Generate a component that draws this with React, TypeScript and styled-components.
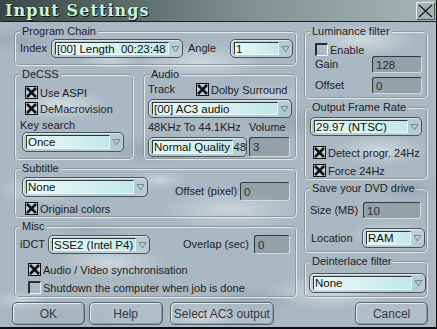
import React from 'react'
import styled, { createGlobalStyle } from 'styled-components'

const GlobalStyle = createGlobalStyle`
    html, body {
        margin: 0;
        padding: 0;
    }
    body {
        font-family: "Liberation Sans", Arial, sans-serif;
        font-size: 11px;
        color: #1e2225;
    }
`;

const cloud = (w: number, h: number, x: number, y: number, a: number) =>
    `radial-gradient(ellipse ${w}px ${h}px at ${x}px ${y}px, rgba(234,240,243,${a}), rgba(234,240,243,0) 70%)`;
const shade = (w: number, h: number, x: number, y: number, a: number) =>
    `radial-gradient(ellipse ${w}px ${h}px at ${x}px ${y}px, rgba(128,146,162,${a}), rgba(128,146,162,0) 70%)`;

const sky = [
    cloud(70, 22, 60, 105, 0.65),
    cloud(40, 14, 110, 60, 0.5),
    cloud(90, 26, 200, 62, 0.55),
    cloud(80, 24, 360, 40, 0.6),
    cloud(50, 16, 270, 95, 0.45),
    cloud(60, 20, 40, 190, 0.55),
    cloud(100, 30, 230, 210, 0.5),
    cloud(40, 14, 160, 180, 0.45),
    cloud(70, 22, 380, 150, 0.55),
    cloud(80, 24, 110, 262, 0.55),
    cloud(90, 26, 330, 292, 0.55),
    cloud(60, 20, 390, 235, 0.5),
    cloud(50, 16, 200, 318, 0.5),
    cloud(40, 14, 20, 300, 0.45),
    shade(70, 22, 150, 150, 0.45),
    shade(80, 24, 290, 122, 0.4),
    shade(90, 24, 60, 318, 0.4),
    shade(70, 22, 250, 300, 0.35),
    shade(60, 20, 20, 40, 0.35),
    shade(50, 18, 410, 190, 0.35),
    shade(50, 16, 90, 230, 0.35),
    '#a9b8c3',
].join(', ');

const Window = styled.div`
    width: 437px;
    height: 329px;
    box-sizing: border-box;
    display: flex;
    flex-direction: column;
    background: ${sky};
    border-right: 1px solid #0b0d0e;
    border-bottom: 2px solid #0b0d0e;
    overflow: hidden;
`;

const TitleBar = styled.div`
    height: 21px;
    flex-shrink: 0;
    display: flex;
    align-items: center;
    justify-content: space-between;
    padding: 0 1px 0 5px;
    background: linear-gradient(90deg, #394747 0%, #5d6d6c 30%, #849493 60%, #a6b5b4 100%);
    border-bottom: 1px solid #1a2222;
`;

const Title = styled.h1`
    margin: 0;
    font-family: "DejaVu Serif", "Liberation Serif", serif;
    font-weight: bold;
    font-size: 16px;
    letter-spacing: 1.1px;
    color: #cdf3dc;
    text-shadow: 1px 1px 0 #0f1b16, 0 0 1px #0f1b16;
`;

const CloseBox = styled.div`
    width: 19px;
    height: 18px;
    box-sizing: border-box;
    display: flex;
    align-items: center;
    justify-content: center;
    border-top: 1px solid #e6eded;
    border-left: 1px solid #e6eded;
    border-bottom: 1px solid #4a5656;
    border-right: 1px solid #4a5656;
`;

const Main = styled.div`
    display: flex;
    gap: 7px;
    padding: 3px 0 0 14px;
`;

const Column = styled.div<{ $w: number }>`
    width: ${p => p.$w}px;
    display: flex;
    flex-direction: column;
    gap: 2px;
`;

const GroupRow = styled.div`
    display: flex;
    gap: 9px;
`;

const Group = styled.fieldset<{ $h: number; $w?: number }>`
    margin: 0;
    padding: 0 3px;
    min-width: 0;
    box-sizing: border-box;
    height: ${p => p.$h}px;
    ${p => (p.$w ? `width: ${p.$w}px;` : '')}
    border: 2px groove #e2eaee;
    border-radius: 5px;
    display: flex;
    flex-direction: column;
`;

const Legend = styled.legend`
    padding: 0 2px;
    margin-left: 1px;
    line-height: 13px;
    font-size: 11px;
`;

const Row = styled.div<{ $mt?: number; $ml?: number; $gap?: number; $align?: string }>`
    display: flex;
    align-items: ${p => p.$align ?? 'center'};
    gap: ${p => p.$gap ?? 0}px;
    margin-top: ${p => p.$mt ?? 0}px;
    margin-left: ${p => p.$ml ?? 0}px;
`;

const Label = styled.span<{ $w?: number; $ml?: number; $mt?: number }>`
    ${p => (p.$w ? `width: ${p.$w}px;` : '')}
    margin-left: ${p => p.$ml ?? 0}px;
    margin-top: ${p => p.$mt ?? 0}px;
    flex-shrink: 0;
    white-space: nowrap;
    line-height: 13px;
`;

const ComboShell = styled.div<{ $w: number; $h?: number; $ml?: number }>`
    width: ${p => p.$w}px;
    height: ${p => p.$h ?? 19}px;
    margin-left: ${p => p.$ml ?? 0}px;
    flex-shrink: 0;
    box-sizing: border-box;
    display: flex;
    padding: 2px 1px 2px 3px;
    border: 1px solid #46545a;
    border-radius: 5px;
    background: rgba(196, 222, 226, 0.5);
    box-shadow: inset 1px 1px 0 rgba(255, 255, 255, 0.55);
    overflow: hidden;
`;

const ComboField = styled.div`
    flex: 1;
    min-width: 0;
    display: flex;
    align-items: center;
    padding-left: 1px;
    border-top: 1px solid #2c383a;
    border-left: 1px solid #2c383a;
    border-bottom: 1px solid #eef8f8;
    border-right: 1px solid #eef8f8;
    background: linear-gradient(90deg, #e9f7f3 0%, #d6f1ee 55%, #bfe7ec 100%);
    white-space: pre;
    overflow: visible;
    font-size: 11.5px;
    color: #0d1113;
`;

const ComboArrow = styled.div`
    width: 12px;
    flex-shrink: 0;
    display: flex;
    align-items: center;
    justify-content: center;
    position: relative;
    z-index: 1;
`;

const Edit = styled.div<{ $w: number; $h?: number; $ml?: number }>`
    width: ${p => p.$w}px;
    height: ${p => p.$h ?? 17}px;
    margin-left: ${p => p.$ml ?? 0}px;
    flex-shrink: 0;
    box-sizing: border-box;
    display: flex;
    align-items: center;
    padding-left: 3px;
    border-top: 1px solid #2f3a3d;
    border-left: 1px solid #2f3a3d;
    border-bottom: 1px solid #d2dcdf;
    border-right: 1px solid #d2dcdf;
    border-radius: 3px;
    background: rgba(128, 138, 144, 0.5);
    font-size: 11.5px;
    color: #2a3032;
`;

const CheckLine = styled.label<{ $mt?: number; $ml?: number }>`
    display: flex;
    align-items: center;
    gap: 2px;
    margin-top: ${p => p.$mt ?? 0}px;
    margin-left: ${p => p.$ml ?? 0}px;
    height: 13px;
    white-space: nowrap;
    font-size: 11px;
`;

const Box = styled.span<{ $on: boolean }>`
    width: 13px;
    height: 13px;
    flex-shrink: 0;
    box-sizing: border-box;
    display: inline-flex;
    ${p =>
        p.$on
            ? `border: 1px solid #101214; background: rgba(255,255,255,.3);`
            : `border-top: 2px solid #2a2e30; border-left: 2px solid #2a2e30;
               border-bottom: 1px solid #f4f8fa; border-right: 1px solid #f4f8fa;`}
`;

const ButtonBar = styled.div`
    display: flex;
    gap: 4px;
    padding: 4px 8px 0 12px;
`;

const Button = styled.button<{ $w: number; $ml?: number }>`
    width: ${p => p.$w}px;
    height: 23px;
    margin-left: ${p => p.$ml ?? 0}px;
    padding: 0;
    border: 1px solid #56646b;
    border-radius: 5px;
    background: rgba(205, 216, 224, 0.22);
    box-shadow: inset 1px 1px 0 rgba(255, 255, 255, 0.7), inset -1px -1px 0 rgba(70, 82, 90, 0.35);
    font-family: "Liberation Sans", Arial, sans-serif;
    font-size: 12px;
    color: #33393c;
`;

const Arrow = () => (
    <svg width="9" height="8" viewBox="0 0 9 8">
        <polygon points="1,1.5 8,1.5 4.5,7" fill="none" stroke="#6d8a92" strokeWidth="1" />
    </svg>
);

const Combo = (props: { w: number; h?: number; ml?: number; value: string }) => (
    <ComboShell $w={props.w} $h={props.h} $ml={props.ml}>
        <ComboField>{props.value}</ComboField>
        <ComboArrow>
            <Arrow />
        </ComboArrow>
    </ComboShell>
);

const Check = (props: { on?: boolean; text: string; mt?: number; ml?: number }) => (
    <CheckLine $mt={props.mt} $ml={props.ml}>
        <Box $on={!!props.on}>
            {props.on && (
                <svg width="11" height="11" viewBox="0 0 11 11">
                    <path d="M1 1 L10 10 M10 1 L1 10" stroke="#0c0e10" strokeWidth="2.6" />
                </svg>
            )}
        </Box>
        {props.text}
    </CheckLine>
);

const App = () => {
    return (
        <>
            <GlobalStyle />
            <Window>
                <TitleBar>
                    <Title>Input Settings</Title>
                    <CloseBox>
                        <svg width="15" height="14" viewBox="0 0 15 14">
                            <path d="M1 1 L14 13 M14 1 L1 13" stroke="#161a1a" strokeWidth="1.2" />
                        </svg>
                    </CloseBox>
                </TitleBar>

                <Main>
                    <Column $w={283}>
                        <Group $h={41}>
                            <Legend>Program Chain</Legend>
                            <Row $mt={1} $ml={1}>
                                <Label $w={31}>Index</Label>
                                <Combo w={132} value="[00] Length  00:23:48" />
                                <Label $w={42} $ml={5}>Angle</Label>
                                <Combo w={63} value="1" />
                            </Row>
                        </Group>

                        <GroupRow>
                            <Group $h={92} $w={120}>
                                <Legend>DeCSS</Legend>
                                <Check on text="Use ASPI" mt={5} ml={6} />
                                <Check on text="DeMacrovision" mt={3} ml={6} />
                                <Label $ml={1} $mt={4}>Key search</Label>
                                <Combo w={102} h={20} ml={3} value="Once" />
                            </Group>

                            <Group $h={92} $w={154}>
                                <Legend>Audio</Legend>
                                <Row $mt={2}>
                                    <Label $w={48}>Track</Label>
                                    <Check on text="Dolby Surround" />
                                </Row>
                                <Row $mt={3}>
                                    <Combo w={144} value="[00] AC3 audio" />
                                </Row>
                                <Row $mt={3}>
                                    <Label $w={101}>48KHz To 44.1KHz</Label>
                                    <Label>Volume</Label>
                                </Row>
                                <Row $mt={3} $gap={2}>
                                    <Combo w={99} h={20} value="Normal Quality 48" />
                                    <Edit $w={41} $h={20}>3</Edit>
                                </Row>
                            </Group>
                        </GroupRow>

                        <Group $h={56}>
                            <Legend>Subtitle</Legend>
                            <Row $mt={2} $ml={3} $align="flex-start">
                                <Combo w={126} h={20} value="None" />
                                <Row $mt={5} $ml={27}>
                                    <Label $w={65}>Offset (pixel)</Label>
                                    <Edit $w={50} $h={19}>0</Edit>
                                </Row>
                            </Row>
                            <Check on text="Original colors" mt={1} ml={6} />
                        </Group>

                        <Group $h={78}>
                            <Legend>Misc</Legend>
                            <Row $mt={2} $ml={1}>
                                <Label $w={28}>iDCT</Label>
                                <Combo w={102} value="SSE2 (Intel P4)" />
                                <Label $w={71} $ml={33}>Overlap (sec)</Label>
                                <Edit $w={36} $h={19}>0</Edit>
                            </Row>
                            <Check on text="Audio / Video synchronisation" mt={9} ml={9} />
                            <Check text="Shutdown the computer when job is done" mt={5} ml={9} />
                        </Group>
                    </Column>

                    <Column $w={124}>
                        <Group $h={74}>
                            <Legend>Luminance filter</Legend>
                            <Check text="Enable" mt={5} ml={6} />
                            <Row $mt={0} $ml={6}>
                                <Label $w={57}>Gain</Label>
                                <Edit $w={50}>128</Edit>
                            </Row>
                            <Row $mt={4} $ml={6}>
                                <Label $w={57}>Offset</Label>
                                <Edit $w={50}>0</Edit>
                            </Row>
                        </Group>

                        <Group $h={79}>
                            <Legend>Output Frame Rate</Legend>
                            <Row $mt={3} $ml={1}>
                                <Combo w={112} value="29.97 (NTSC)" />
                            </Row>
                            <Check on text="Detect progr. 24Hz" mt={10} ml={4} />
                            <Check on text="Force 24Hz" mt={5} ml={4} />
                        </Group>

                        <Group $h={71}>
                            <Legend>Save your DVD drive</Legend>
                            <Row $mt={7} $ml={1}>
                                <Label $w={53}>Size (MB)</Label>
                                <Edit $w={58}>10</Edit>
                            </Row>
                            <Row $mt={9} $ml={2}>
                                <Label $w={51}>Location</Label>
                                <Combo w={63} h={20} value="RAM" />
                            </Row>
                        </Group>

                        <Group $h={43}>
                            <Legend>Deinterlace filter</Legend>
                            <Row $mt={5}>
                                <Combo w={117} h={20} value="None" />
                            </Row>
                        </Group>
                    </Column>
                </Main>

                <ButtonBar>
                    <Button $w={73}>OK</Button>
                    <Button $w={74}>Help</Button>
                    <Button $w={105} $ml={3}>Select AC3 output</Button>
                    <Button $w={73} $ml={77}>Cancel</Button>
                </ButtonBar>
            </Window>
        </>
    )
}

export default React.memo(App);
